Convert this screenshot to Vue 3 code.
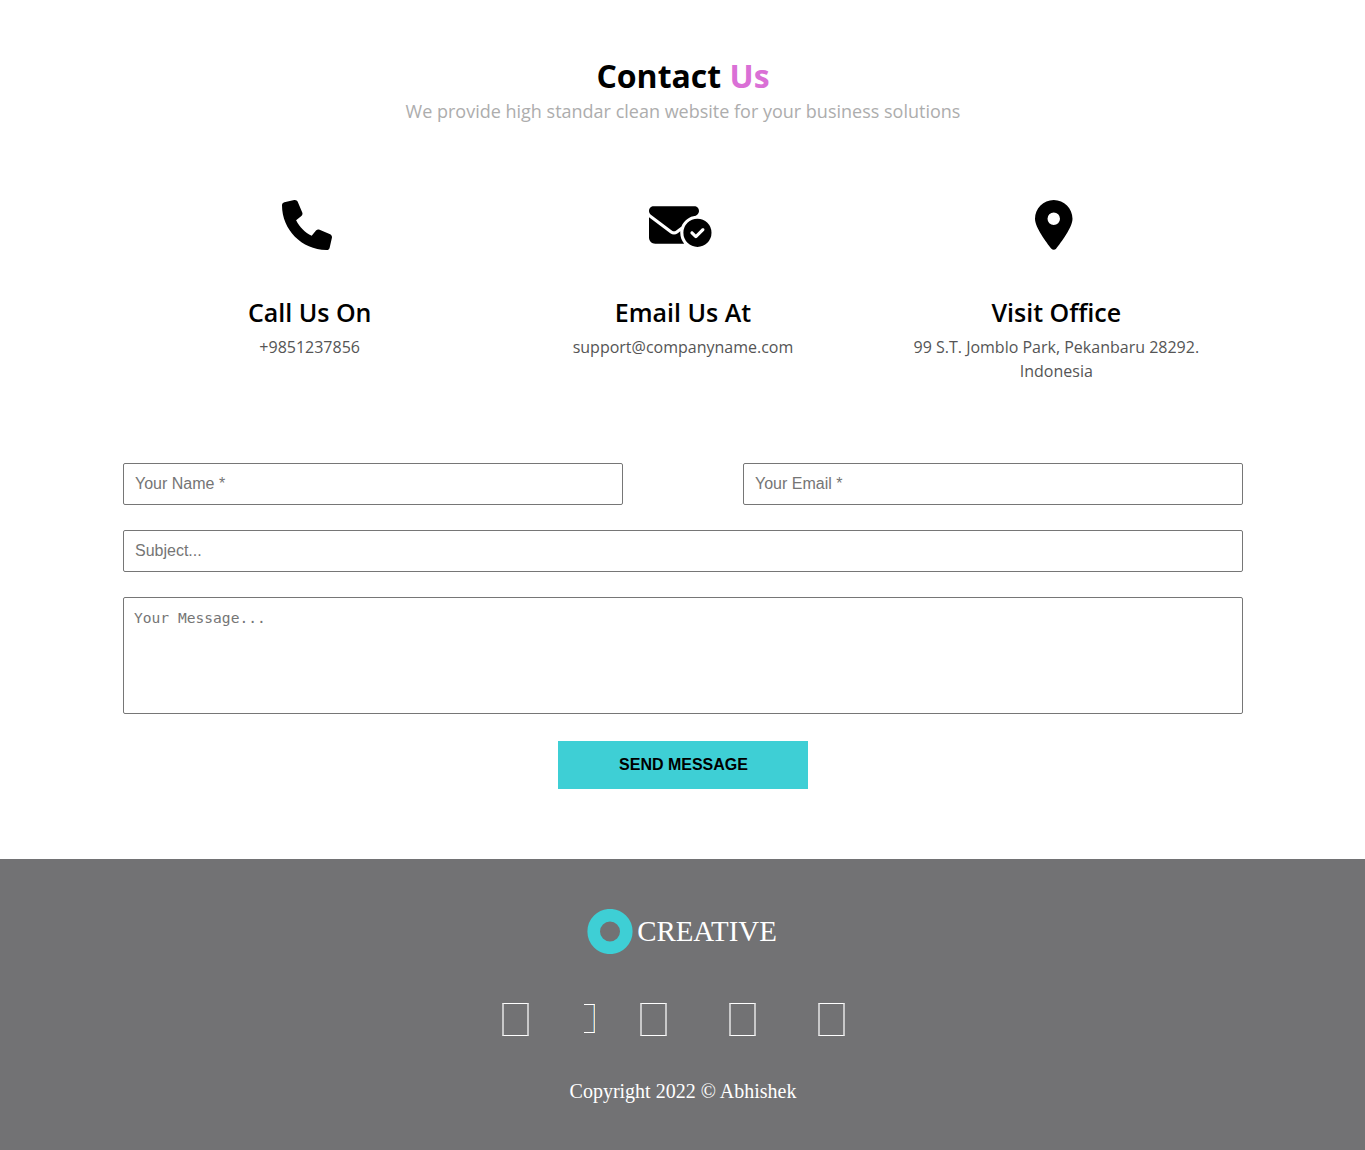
<script setup>
const contacts = [
  {
    title: 'Call Us On',
    text: '+9851237856',
    box: '0 0 512 512',
    width: 50,
    path: 'M511.2 387l-23.25 100.8c-3.266 14.25-15.79 24.22-30.46 24.22C205.2 512 0 306.8 0 54.5c0-14.66 9.969-27.2 24.22-30.45l100.8-23.25C139.7-2.602 154.7 5.018 160.8 18.92l46.52 108.5c5.438 12.78 1.77 27.67-8.98 36.45L144.5 207.1c33.98 69.22 90.26 125.5 159.5 159.5l44.08-53.8c8.688-10.78 23.69-14.51 36.47-8.975l108.5 46.51C506.1 357.2 514.6 372.4 511.2 387z'
  },
  {
    title: 'Email Us At',
    text: 'support@companyname.com',
    box: '0 0 640 512',
    width: 62.5,
    path: 'M48 64C21.5 64 0 85.5 0 112c0 15.1 7.1 29.3 19.2 38.4L236.8 313.6c11.4 8.5 27 8.5 38.4 0l57.4-43c23.9-59.8 79.7-103.3 146.3-109.8l13.9-10.4c12.1-9.1 19.2-23.3 19.2-38.4c0-26.5-21.5-48-48-48H48zM294.4 339.2c-22.8 17.1-54 17.1-76.8 0L0 176V384c0 35.3 28.7 64 64 64H360.2C335.1 417.6 320 378.5 320 336c0-5.6 .3-11.1 .8-16.6l-26.4 19.8zM640 336a144 144 0 1 0 -288 0 144 144 0 1 0 288 0zm-76.7-43.3c6.2 6.2 6.2 16.4 0 22.6l-72 72c-6.2 6.2-16.4 6.2-22.6 0l-40-40c-6.2-6.2-6.2-16.4 0-22.6s16.4-6.2 22.6 0L480 353.4l60.7-60.7c6.2-6.2 16.4-6.2 22.6 0z'
  },
  {
    title: 'Visit Office',
    text: '99 S.T. Jomblo Park, Pekanbaru 28292. Indonesia',
    box: '0 0 384 512',
    width: 37.5,
    path: 'M215.7 499.2C267 435 384 279.4 384 192C384 86 298 0 192 0S0 86 0 192c0 87.4 117 243 168.3 307.2c12.3 15.3 35.1 15.3 47.4 0zM192 128a64 64 0 1 1 0 128 64 64 0 1 1 0-128z'
  }
]
</script>

<template>
  <main class="contact">
    <header class="heading">
      <h1>Contact <span>Us</span></h1>
      <p>We provide high standar clean website for your business solutions</p>
    </header>

    <section class="cards">
      <article v-for="c in contacts" :key="c.title" class="card">
        <svg class="icon" :viewBox="c.box" :width="c.width" height="50"><path :d="c.path" /></svg>
        <h2>{{ c.title }}</h2>
        <p>{{ c.text }}</p>
      </article>
    </section>

    <form class="form" @submit.prevent>
      <div class="row">
        <input type="text" placeholder="Your Name *" />
        <input type="email" placeholder="Your Email *" />
      </div>
      <input type="text" placeholder="Subject..." />
      <textarea placeholder="Your Message..."></textarea>
      <button type="submit">SEND MESSAGE</button>
    </form>
  </main>

  <footer class="footer">
    <div class="logo">
      <svg width="46" height="45" viewBox="0 0 46 45">
        <circle cx="23" cy="22.5" r="16.3" fill="none" stroke="#3ecfd5" stroke-width="12.6" />
      </svg>
      <span>CREATIVE</span>
    </div>
    <div class="social">
      <i class="glyph"></i>
      <i class="glyph clipped"></i>
      <i class="glyph"></i>
      <i class="glyph"></i>
      <i class="glyph"></i>
    </div>
    <p class="copyright">Copyright 2022 © Abhishek</p>
  </footer>
</template>

<style>
body {
  margin: 0;
  background: #fff;
}
</style>

<style scoped>
* {
  box-sizing: border-box;
}
h1,
h2,
p {
  margin: 0;
}
.contact {
  width: 1120px;
  height: 859px;
  margin: 0 auto;
  position: relative;
  left: 0.5px;
  padding-top: 54px;
  font-family: 'Open Sans', sans-serif;
  text-align: center;
}
h1 {
  font-size: 32px;
  line-height: 44px;
  font-weight: 700;
  color: #000;
}
h1 span {
  color: #da70d6;
}
.heading p {
  font-size: 18px;
  line-height: 27px;
  color: #adadad;
}
.cards {
  display: flex;
  margin-top: 75px;
  height: 263px;
}
.card {
  flex: 1;
  display: flex;
  flex-direction: column;
  align-items: center;
}
.icon {
  margin-right: 5px;
  fill: #000;
}
h2 {
  margin-top: 44px;
  font-size: 25px;
  line-height: 36px;
  font-weight: 600;
  color: #000;
}
.card p {
  width: 300px;
  margin-top: 5px;
  font-size: 16px;
  line-height: 24px;
  color: #555;
}
.form {
  display: flex;
  flex-direction: column;
  gap: 25px;
}
.row {
  display: flex;
  justify-content: space-between;
}
input,
textarea {
  width: 100%;
  height: 42px;
  padding: 10px;
  border: 1px solid #767676;
  border-radius: 2px;
  background: #fff;
  font: 16px 'Liberation Sans', sans-serif;
  outline: 0;
}
input {
  padding: 10px 11px;
}
.row input {
  width: 500px;
}
textarea {
  display: block;
  height: 117px;
  resize: none;
  font: 14.6px/20px 'DejaVu Sans Mono', monospace;
}
::placeholder {
  color: #757575;
  opacity: 1;
}
button {
  align-self: center;
  width: 250px;
  height: 48px;
  margin-top: 2px;
  padding: 0 0 0 1px;
  border: 0;
  background: #3ecfd5;
  color: #000;
  font: bold 16px 'Liberation Sans', sans-serif;
}
.footer {
  height: 291px;
  padding-top: 50px;
  background: #727274;
  color: #fff;
  font-family: 'Liberation Serif', serif;
}
.logo {
  display: flex;
  align-items: center;
  justify-content: center;
  gap: 4px;
  height: 45px;
  padding-right: 1px;
  font-size: 28.9px;
}
.social {
  display: flex;
  align-items: center;
  width: 343px;
  height: 33px;
  margin: 49px 0 0 502px;
}
.glyph {
  width: 27px;
  height: 33px;
  margin-right: 62px;
  flex: none;
  border: solid #fff;
  border-width: 1px;
  border-left: 2px solid #c8c8c9;
  border-right: 2px solid #c8c8c9;
}
.glyph:first-child {
  margin-right: 55px;
}
.glyph.clipped {
  width: 11px;
  height: 29px;
  margin: 0 45px 2px 0;
  border-left: 0;
  border-right: 1px solid #f5deb3;
  box-shadow: inset -1px 0 #75a5c9;
}
.copyright {
  margin-top: 43px;
  padding-left: 1px;
  text-align: center;
  font-size: 20px;
  line-height: 24px;
}
</style>
